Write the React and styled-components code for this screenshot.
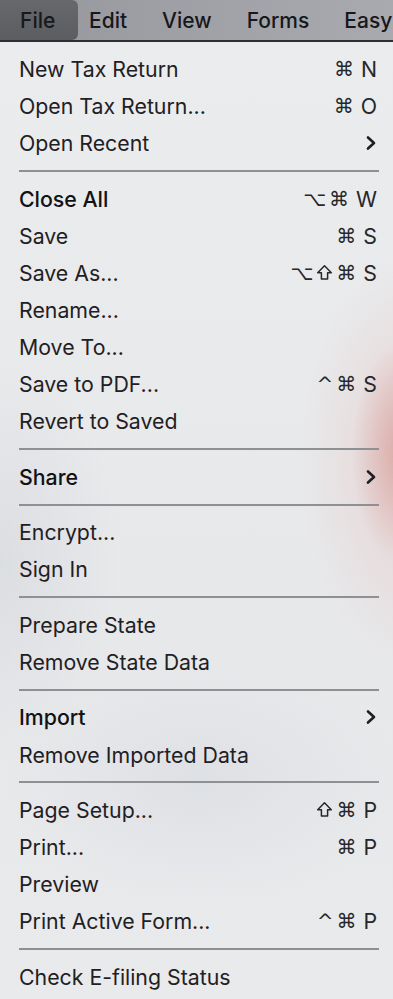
import React from "react";
import styled, { createGlobalStyle } from "styled-components";

const Global = createGlobalStyle`
  html, body { margin: 0; padding: 0; }
  body {
    width: 393px;
    height: 999px;
    overflow: hidden;
    background: #e9eaec;
    font-family: Inter, "Noto Sans", "DejaVu Sans", sans-serif;
    -webkit-font-smoothing: antialiased;
  }
`;

const Screen = styled.div`
  width: 393px;
  height: 999px;
  display: flex;
  flex-direction: column;
  overflow: hidden;
`;

const MenuBar = styled.div`
  height: 40px;
  flex: none;
  display: flex;
  align-items: stretch;
  gap: 35px;
  background: linear-gradient(90deg, #95979c 0%, #9fa1a6 50%, #a8aaaf 100%);
  border-bottom: 2px solid #2e2f33;
  white-space: nowrap;
  overflow: hidden;
`;

const MenuTitle = styled.div`
  display: flex;
  align-items: center;
  font-size: 21px;
  font-weight: 500;
  color: #17181b;
  ${(p) =>
    p.$active
      ? `
    width: 78px;
    box-sizing: border-box;
    padding-left: 20px;
    margin-right: -24px;
    background: linear-gradient(180deg, #66686c 0%, #5b5d61 100%);
    border-radius: 0 6px 6px 0;
  `
      : ""}
`;

const Menu = styled.div`
  flex: 1;
  padding-top: 8.5px;
  background:
    radial-gradient(ellipse 50px 110px at 402px 410px, rgba(214, 150, 145, 0.7), rgba(214, 150, 145, 0) 100%),
    radial-gradient(ellipse 120px 210px at 420px 420px, rgba(228, 190, 186, 0.55), rgba(228, 190, 186, 0) 100%),
    radial-gradient(ellipse 120px 200px at 0px 520px, rgba(205, 209, 215, 0.45), rgba(205, 209, 215, 0) 100%),
    radial-gradient(ellipse 200px 120px at 200px 740px, rgba(212, 216, 222, 0.5), rgba(212, 216, 222, 0) 100%),
    linear-gradient(180deg, #ebecee 0%, #e7e8ea 60%, #e9eaec 100%);
`;

const Row = styled.div`
  height: 37.1px;
  display: flex;
  align-items: center;
  justify-content: space-between;
  padding: 0 16px 0 19px;
  font-size: 21.3px;
  font-weight: ${(p) => (p.$bold ? 500 : 400)};
  color: ${(p) => (p.$bold ? "#111214" : "#1f2023")};
`;

const Shortcut = styled.span`
  display: flex;
  align-items: center;
  gap: 3px;
  font-weight: 400;
  font-size: 21.3px;
  color: #26272a;
  white-space: pre;
`;

const Mod = styled.span`
  font-family: "DejaVu Sans", sans-serif;
  font-size: 20px;
`;

const Key = styled.span`
  margin-left: 4px;
`;

const Separator = styled.div`
  height: 18.4px;
  display: flex;
  align-items: center;
  padding: 0 14px 0 19px;
  &::after {
    content: "";
    flex: 1;
    height: 2px;
    background: #8f9093;
  }
`;

const Chevron = () => (
  <svg width="12" height="16" viewBox="0 0 12 16">
    <path d="M3 2.5 L9 8 L3 13.5" fill="none" stroke="#1e1f22" strokeWidth="2.6" strokeLinecap="round" strokeLinejoin="round" />
  </svg>
);

const ShiftIcon = () => (
  <svg width="17" height="17" viewBox="0 0 17 17">
    <path
      d="M8.5 1.8 L15.3 8.8 H11.6 V15 H5.4 V8.8 H1.7 Z"
      fill="none"
      stroke="#26272a"
      strokeWidth="1.5"
      strokeLinejoin="round"
    />
  </svg>
);

const groups = [
  [
    { t: "New Tax Return", m: ["⌘"], k: "N" },
    { t: "Open Tax Return...", m: ["⌘"], k: "O" },
    { t: "Open Recent", sub: true },
  ],
  [
    { t: "Close All", m: ["⌥", "⌘"], k: "W", b: true },
    { t: "Save", m: ["⌘"], k: "S" },
    { t: "Save As...", m: ["⌥", "shift", "⌘"], k: "S" },
    { t: "Rename..." },
    { t: "Move To..." },
    { t: "Save to PDF...", m: ["^", "⌘"], k: "S" },
    { t: "Revert to Saved" },
  ],
  [{ t: "Share", sub: true, b: true }],
  [{ t: "Encrypt..." }, { t: "Sign In" }],
  [{ t: "Prepare State" }, { t: "Remove State Data" }],
  [{ t: "Import", sub: true, b: true }, { t: "Remove Imported Data" }],
  [
    { t: "Page Setup...", m: ["shift", "⌘"], k: "P" },
    { t: "Print...", m: ["⌘"], k: "P" },
    { t: "Preview" },
    { t: "Print Active Form...", m: ["^", "⌘"], k: "P" },
  ],
  [{ t: "Check E-filing Status" }],
];

export default function App() {
  return (
    <Screen>
      <Global />
      <MenuBar>
        <MenuTitle $active>File</MenuTitle>
        <MenuTitle>Edit</MenuTitle>
        <MenuTitle>View</MenuTitle>
        <MenuTitle>Forms</MenuTitle>
        <MenuTitle>Easy</MenuTitle>
      </MenuBar>
      <Menu>
        {groups.map((g, gi) => (
          <React.Fragment key={gi}>
            {gi > 0 && <Separator />}
            {g.map((it) => (
              <Row key={it.t} $bold={it.b}>
                <span>{it.t}</span>
                {it.sub ? (
                  <Chevron />
                ) : it.k ? (
                  <Shortcut>
                    {it.m.map((m, i) =>
                      m === "shift" ? <ShiftIcon key={i} /> : <Mod key={i}>{m}</Mod>
                    )}
                    <Key>{it.k}</Key>
                  </Shortcut>
                ) : null}
              </Row>
            ))}
          </React.Fragment>
        ))}
      </Menu>
    </Screen>
  );
}
